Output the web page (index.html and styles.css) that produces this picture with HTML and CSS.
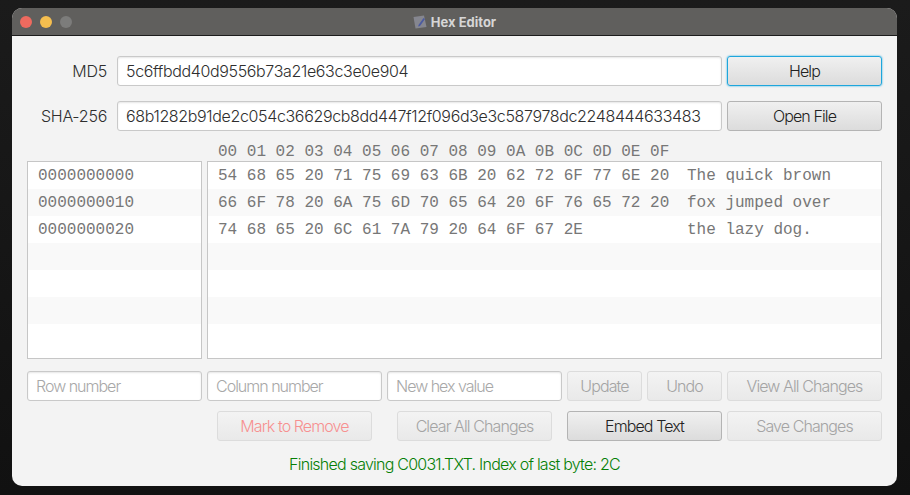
FILE: index.html
```html
<!DOCTYPE html>
<html lang="en">
<head>
  <meta charset="UTF-8" />
  <title>Hex Editor</title>
  <link rel="stylesheet" href="styles.css">
</head>
<body>
  <div class="window">
    <div class="titlebar">
      <div class="lights">
        <span class="light red"></span>
        <span class="light yellow"></span>
        <span class="light gray"></span>
      </div>
      <div class="title">
        <svg class="app-icon" width="14" height="14" viewBox="0 0 14 14">
          <path d="M0.5 2 L11 0.5 L13.5 12 L2.5 13.5 Z" fill="#85868f"/>
          <path d="M5.5 10 L10.5 3 L12 4 L7 11 L5.2 11.5 Z" fill="#4b5aa0"/>
        </svg>
        <span>Hex Editor</span>
      </div>
    </div>

    <div class="content">
      <div class="hash-row">
        <label class="hash-label">MD5</label>
        <input class="field hash-field" type="text" value="5c6ffbdd40d9556b73a21e63c3e0e904" />
        <button class="btn wide focused">Help</button>
      </div>
      <div class="hash-row">
        <label class="hash-label">SHA-256</label>
        <input class="field hash-field" type="text" value="68b1282b91de2c054c36629cb8dd447f12f096d3e3c587978dc2248444633483" />
        <button class="btn wide">Open File</button>
      </div>

      <div class="col-header">00 01 02 03 04 05 06 07 08 09 0A 0B 0C 0D 0E 0F</div>

      <div class="tables">
        <div class="table offsets">
          <div class="row">0000000000</div>
          <div class="row">0000000010</div>
          <div class="row">0000000020</div>
          <div class="row"></div>
          <div class="row"></div>
          <div class="row"></div>
          <div class="row"></div>
        </div>
        <div class="table bytes">
          <div class="row"><span class="hex">54 68 65 20 71 75 69 63 6B 20 62 72 6F 77 6E 20</span><span>The quick brown</span></div>
          <div class="row"><span class="hex">66 6F 78 20 6A 75 6D 70 65 64 20 6F 76 65 72 20</span><span>fox jumped over</span></div>
          <div class="row"><span class="hex">74 68 65 20 6C 61 7A 79 20 64 6F 67 2E</span><span>the lazy dog.</span></div>
          <div class="row"></div>
          <div class="row"></div>
          <div class="row"></div>
          <div class="row"></div>
        </div>
      </div>

      <div class="edit-row">
        <input class="field small" type="text" placeholder="Row number" />
        <input class="field small" type="text" placeholder="Column number" />
        <input class="field small" type="text" placeholder="New hex value" />
        <button class="btn narrow" disabled>Update</button>
        <button class="btn narrow" disabled>Undo</button>
        <button class="btn wide" disabled>View All Changes</button>
      </div>

      <div class="action-row">
        <button class="btn wide danger" disabled>Mark to Remove</button>
        <button class="btn wide push-clear" disabled>Clear All Changes</button>
        <button class="btn wide push-embed">Embed Text</button>
        <button class="btn wide" disabled>Save Changes</button>
      </div>

      <div class="status">Finished saving C0031.TXT. Index of last byte: 2C</div>
    </div>
  </div>
</body>
</html>
```

FILE: styles.css
```css
* {
  box-sizing: border-box;
}
html, body {
  margin: 0;
  height: 100%;
}
body {
  background: linear-gradient(#1b1b1b, #111111);
  padding: 8px 13px 9px 12px;
  font-family: Inter, "Liberation Sans", sans-serif;
  font-weight: 300;
  overflow: hidden;
}
.window {
  height: 478px;
  background-color: #f3f3f3;
  border-radius: 10px;
  overflow: hidden;
  display: flex;
  flex-direction: column;
}
.titlebar {
  position: relative;
  height: 28px;
  flex: none;
  background-color: #605f5d;
  border-bottom: 1px solid #1c1c1c;
  display: flex;
  align-items: center;
  justify-content: center;
}
.lights {
  position: absolute;
  left: 8px;
  top: 8px;
  display: flex;
  gap: 8px;
}
.light {
  width: 12px;
  height: 12px;
  border-radius: 50%;
}
.red { background-color: #ee6a5f; }
.yellow { background-color: #f5be4f; }
.gray { background-color: #7c7c7b; }
.title {
  display: flex;
  align-items: center;
  gap: 4px;
  color: #d6d6d6;
  font-size: 13px;
  font-weight: 700;
}
.content {
  flex: 1;
  padding: 20px 15px 0;
  display: flex;
  flex-direction: column;
}
.hash-row {
  display: flex;
  align-items: center;
  gap: 5px;
  height: 30px;
  margin-bottom: 15px;
}
.hash-label {
  width: 80px;
  margin-right: 5px;
  text-align: right;
  font-size: 16px;
  color: #2e2e2e;
  letter-spacing: -0.25px;
}
.field {
  height: 30px;
  border: 1px solid #c9c9c9;
  border-radius: 3px;
  background-color: #fff;
  box-shadow: inset 0 1px 2px #e6e6e6;
  padding: 0 8px;
  font-family: inherit;
  font-weight: inherit;
  font-size: 16px;
  color: #2e2e2e;
  outline: none;
}
.hash-field {
  width: 605px;
  letter-spacing: -0.35px;
}
.field.small {
  width: 175px;
  letter-spacing: -1px;
}
.field::placeholder {
  color: #a8a8a8;
  opacity: 1;
}
.btn {
  height: 30px;
  border: 1px solid #b4b4b4;
  border-radius: 3px;
  background: linear-gradient(#f0f0f0, #dcdcdc);
  font-family: inherit;
  font-weight: inherit;
  font-size: 16px;
  letter-spacing: -0.9px;
  color: #222;
  padding: 0;
}
.btn.wide {
  width: 155px;
}
.btn.narrow {
  width: 75px;
}
.btn.focused {
  border: 1px solid #1ea6dc;
  box-shadow: 0 0 2px #1ea6dc;
}
.btn:disabled {
  border-color: #dcdcdc;
  background: linear-gradient(#f3f3f3, #e9e9e9);
  color: #a4a4a4;
}
.btn.danger:disabled {
  color: #f79090;
}
.col-header, .table {
  font-family: "Liberation Mono", monospace;
  font-weight: 400;
  font-size: 16px;
  color: #777;
}
.col-header {
  height: 15px;
  margin-top: -3px;
  padding-left: 191px;
  line-height: 18px;
  white-space: pre;
}
.tables {
  display: flex;
  gap: 5px;
  margin-top: 3px;
}
.table {
  height: 198px;
  border: 1px solid #c6c6c6;
  background-color: #fff;
  overflow: hidden;
}
.offsets {
  width: 175px;
}
.bytes {
  width: 675px;
}
.row {
  height: 27px;
  line-height: 28px;
  padding-left: 10px;
  white-space: pre;
  display: flex;
}
.row:nth-child(even) {
  background-color: #f9f9f9;
}
.hex {
  width: 469px;
}
.edit-row {
  display: flex;
  gap: 5px;
  margin-top: 12px;
}
.action-row {
  display: flex;
  justify-content: flex-end;
  gap: 5px;
  margin-top: 10px;
}
.push-clear {
  margin-left: 20px;
}
.push-embed {
  margin-left: 10px;
}
.status {
  margin-top: 13px;
  text-align: center;
  font-size: 16px;
  letter-spacing: -0.76px;
  color: #067f06;
}
```
